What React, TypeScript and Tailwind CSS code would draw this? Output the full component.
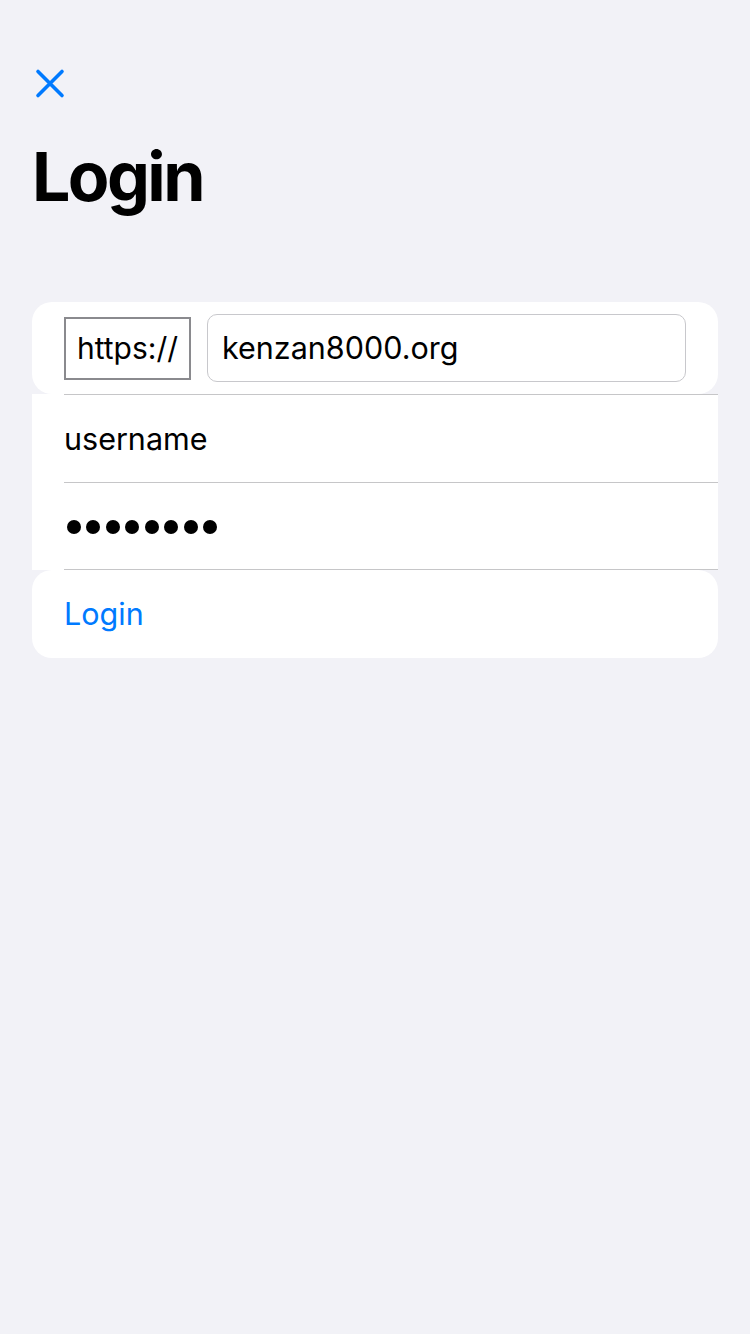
export default function App() {
  return (
    <div className="min-h-[1334px] w-[750px] bg-[#f2f2f7] font-['Inter','Noto_Sans',sans-serif] text-black">
      <div className="px-[32px] pt-[68px]">
        <svg width="32" height="32" viewBox="0 0 32 32" className="ml-[2px]">
          <path d="M4 3.5 L28 27.5 M28 3.5 L4 27.5" stroke="#007aff" strokeWidth="3.6" strokeLinecap="round" fill="none" />
        </svg>
        <h1 className="mt-[35px] text-[68px] font-bold leading-[82px] tracking-[-2.6px]">Login</h1>
      </div>
      <div className="mx-[32px] mt-[85px] flex flex-col">
        <div className="flex h-[92px] items-center gap-[16px] rounded-[20px] bg-white pl-[32px] pr-[32px]">
          <div className="flex h-[63px] w-[127px] items-center justify-center border-2 border-[#8a8a8e] text-[30px] leading-none">https://</div>
          <div className="flex h-[68px] flex-1 items-center rounded-[10px] border border-[#c8c8cc] pl-[14px] text-[30.5px] leading-none">kenzan8000.org</div>
        </div>
        <div className="bg-white pl-[32px]">
          <div className="flex h-[88px] items-center border-t border-[#c6c6c8] text-[30.5px]">username</div>
          <div className="flex h-[88px] items-center gap-[5.5px] border-t border-[#c6c6c8] pl-[2.5px]">
            {Array.from({ length: 8 }).map((_, i) => (
              <span key={i} className="block h-[14px] w-[14px] rounded-full bg-black" />
            ))}
          </div>
        </div>
        <div className="relative flex h-[88px] items-center rounded-[20px] bg-white pl-[32px] text-[30.5px] text-[#007aff]">
          <div className="absolute left-[32px] right-0 top-[-1px] h-px bg-[#c6c6c8]" />
          Login
        </div>
      </div>
    </div>
  );
}
